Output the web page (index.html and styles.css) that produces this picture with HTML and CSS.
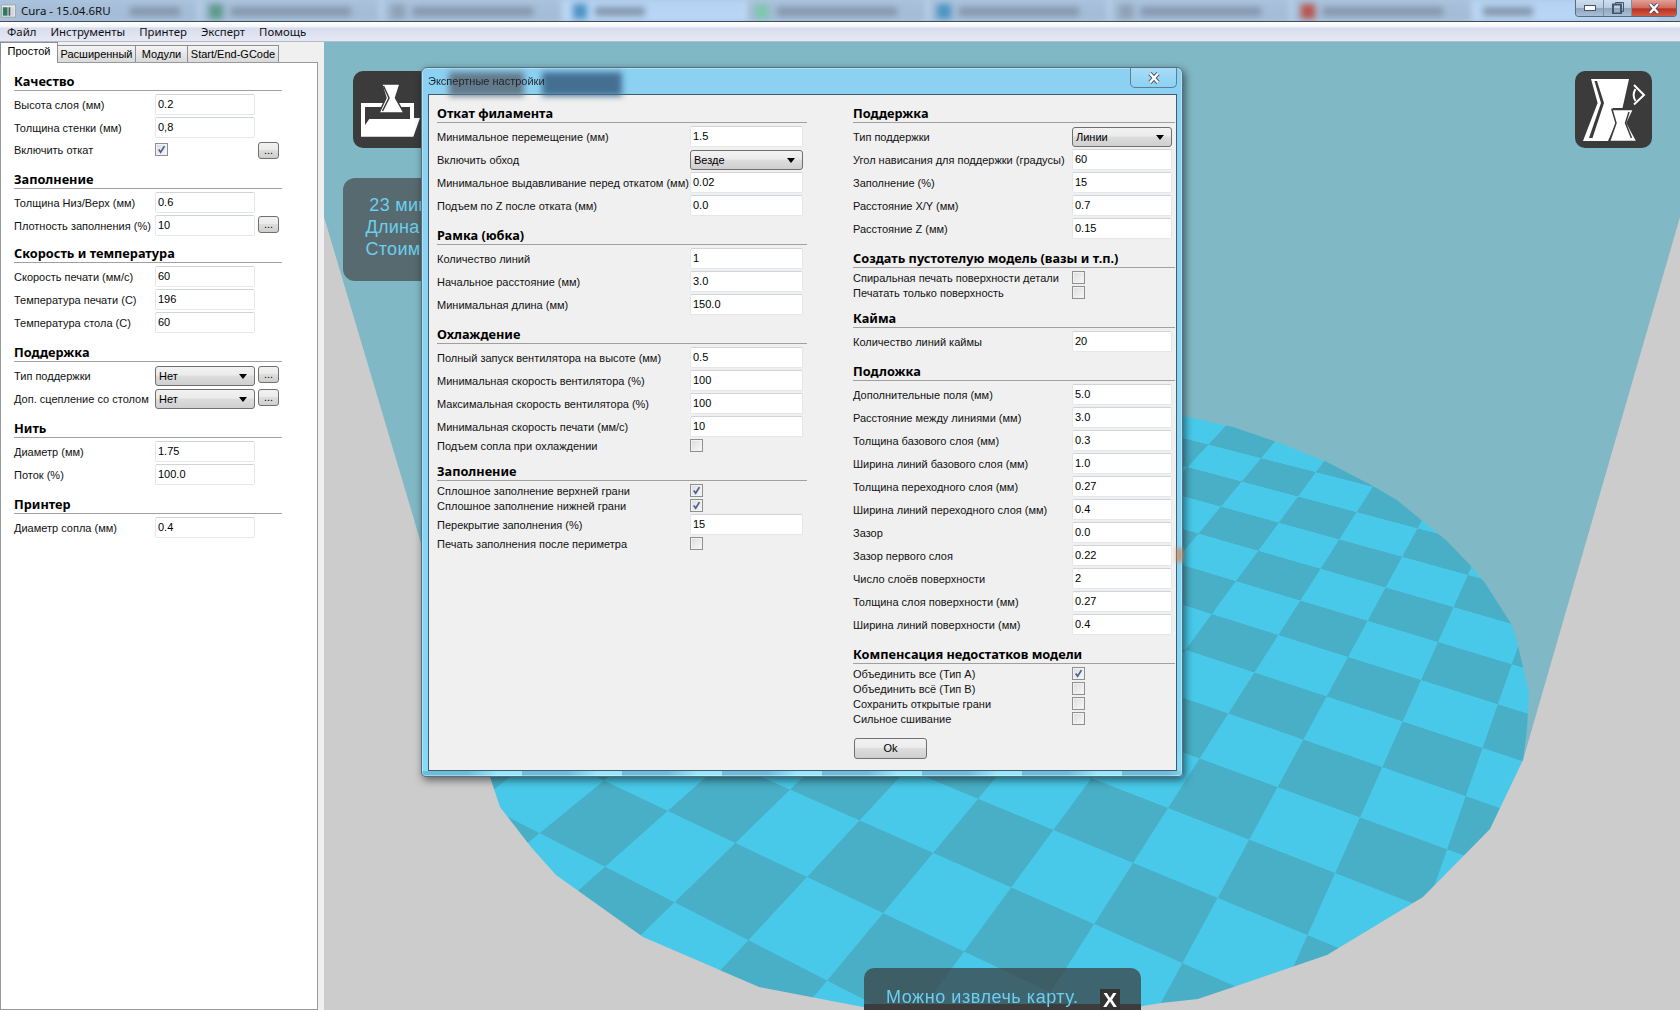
FILE: index.html
```html
<!DOCTYPE html>
<html lang="ru">
<head>
<meta charset="utf-8">
<title>Cura - 15.04.6RU</title>
<link rel="stylesheet" href="styles.css">
</head>
<body>
<div class="window">
  <header class="titlebar">
    <div class="aero">
      <div class="tile first"><i class="blot w50"></i></div>
      <div class="tile"><i class="ico green"></i><i class="blot w120"></i></div>
      <div class="tile"><i class="ico grey"></i><i class="blot w120"></i></div>
      <div class="tile light"><i class="ico blue"></i><i class="blot w50"></i></div>
      <div class="tile"><i class="ico mint"></i><i class="blot w120"></i></div>
      <div class="tile"><i class="ico blue"></i><i class="blot w120"></i></div>
      <div class="tile"><i class="ico grey"></i><i class="blot w120"></i></div>
      <div class="tile"><i class="ico red"></i><i class="blot w120"></i></div>
      <div class="tile light"><i class="blot w50"></i></div>
    </div>
    <div class="app-title">
      <svg class="app-icon" viewBox="0 0 16 14"><rect x="0.5" y="0.5" width="15" height="13" fill="#e8e8e8" stroke="#9aa"/><rect x="2" y="3" width="5" height="9" fill="#2f7a5a"/><rect x="8" y="3" width="2" height="9" fill="#556"/><rect x="11" y="3" width="3" height="9" fill="#cfd8dc"/></svg>
      <span>Cura - 15.04.6RU</span>
    </div>
    <div class="winctl">
      <div class="wbtn"><svg width="12" height="6" viewBox="0 0 12 6"><rect x="0.5" y="0.5" width="11" height="5" fill="#fff" stroke="#456"/></svg></div>
      <div class="wbtn"><svg width="12" height="12" viewBox="0 0 12 12"><path d="M3.5 2.500V.5h8v9H9.500" fill="none" stroke="#456"/><rect x="1" y="2.500" width="8" height="9" fill="none" stroke="#456" stroke-width="2"/></svg></div>
      <div class="wbtn close"><svg width="12" height="11" viewBox="0 0 12 11"><path d="M2 1l8 9M10 1l-8 9" stroke="#445" stroke-width="4"/><path d="M2 1l8 9M10 1l-8 9" stroke="#fff" stroke-width="2.400"/></svg></div>
    </div>
  </header>

  <nav class="menubar">
    <span>Файл</span><span>Инструменты</span><span>Принтер</span><span>Эксперт</span><span>Помощь</span>
  </nav>

  <div class="main">
    <aside class="sidebar">
      <div class="tabs">
        <div class="tab active">Простой</div>
        <div class="tab t2">Расширенный</div>
        <div class="tab t3">Модули</div>
        <div class="tab t4">Start/End-GCode</div>
      </div>
      <div class="page">
        <section class="sec">
          <h3>Качество</h3>
          <div class="row"><div class="lbl">Высота слоя (мм)</div><div class="field">0.2</div></div>
          <div class="row"><div class="lbl">Толщина стенки (мм)</div><div class="field">0,8</div></div>
          <div class="row chk-side"><div class="lbl">Включить откат</div><div class="cellbox"><span class="cb"><svg viewBox="0 0 13 13"><path d="M3.200 6.500l2.300 3.300L10 2.500" fill="none" stroke="#4c5f96" stroke-width="2"/></svg></span></div><div class="btn">...</div></div>
        </section>
        <section class="sec tight">
          <h3>Заполнение</h3>
          <div class="row"><div class="lbl">Толщина Низ/Верх (мм)</div><div class="field">0.6</div></div>
          <div class="row"><div class="lbl">Плотность заполнения (%)</div><div class="field">10</div><div class="btn">...</div></div>
        </section>
        <section class="sec">
          <h3>Скорость и температура</h3>
          <div class="row"><div class="lbl">Скорость печати (мм/с)</div><div class="field">60</div></div>
          <div class="row"><div class="lbl">Температура печати (C)</div><div class="field">196</div></div>
          <div class="row"><div class="lbl">Температура стола (C)</div><div class="field">60</div></div>
        </section>
        <section class="sec">
          <h3>Поддержка</h3>
          <div class="row"><div class="lbl">Тип поддержки</div><div class="combo">Нет</div><div class="btn">...</div></div>
          <div class="row"><div class="lbl">Доп. сцепление со столом</div><div class="combo">Нет</div><div class="btn">...</div></div>
        </section>
        <section class="sec">
          <h3>Нить</h3>
          <div class="row"><div class="lbl">Диаметр (мм)</div><div class="field">1.75</div></div>
          <div class="row"><div class="lbl">Поток (%)</div><div class="field">100.0</div></div>
        </section>
        <section class="sec">
          <h3>Принтер</h3>
          <div class="row"><div class="lbl">Диаметр сопла (мм)</div><div class="field">0.4</div></div>
        </section>
      </div>
    </aside>

    <div class="canvas">
      <div class="sky"></div>
      <div class="bed"><div class="checker"></div></div>

      <div class="toolbtn load">
        <svg viewBox="0 0 77 77"><path fill="#fff" fill-rule="evenodd" d="M8 32H61V47H67L60.300 65.700H8ZM12 36H57V48H16.300L12 54Z"/><path d="M28.700 13H47L42.500 27L51 42H26L33 27Z" fill="#fff" stroke="#3b3b3b" stroke-width="1.500"/><path d="M30.500 15L36 27L29.500 40" fill="none" stroke="#3b3b3b" stroke-width="1.500"/></svg>
      </div>
      <div class="toolbtn view">
        <svg viewBox="0 0 77 77"><path fill="#fff" d="M16 8H54L47.500 37H37.500L41 52L33 70H8L22.600 32Z"/><path d="M19.500 10L26 32L14 67H17.500L29 32L22 10Z" fill="#3b3b3b"/><path fill="#fff" stroke="#3b3b3b" stroke-width="1.500" d="M37 38.500H58.500L52 52L62 70.500H34.500L41 52Z"/><path d="M54 41L50.500 52L56.500 67" fill="none" stroke="#3b3b3b" stroke-width="1.500"/><path d="M59 14L69 24L59 33.500" fill="none" stroke="#fff" stroke-width="2"/><path d="M60.500 18C58 22 58 26 60.500 30" fill="none" stroke="#fff" stroke-width="2"/></svg>
      </div>

      <div class="info">
        <div>23 минуты</div>
        <div>Длина 0.5м</div>
        <div>Стоимость:</div>
      </div>

      <div class="notice">
        <span class="msg">Можно извлечь карту.</span>
        <span class="eject">X</span>
      </div>

      <div class="dialog">
        <div class="dlg-title">
          <i class="ghost g1"></i><i class="ghost g2"></i>
          <span>Экспертные настройки</span>
          <div class="dlg-close"><svg width="14" height="12" viewBox="0 0 14 12"><path d="M3 1.500l8 9M11 1.500l-8 9" stroke="#4a5a66" stroke-width="4.200"/><path d="M3 1.500l8 9M11 1.500l-8 9" stroke="#fff" stroke-width="2.400"/></svg></div>
        </div>
        <div class="dlg-body">
          <div class="col col-l">
            <section class="sec">
              <h3>Откат филамента</h3>
              <div class="row"><div class="lbl">Минимальное перемещение (мм)</div><div class="field">1.5</div></div>
              <div class="row"><div class="lbl">Включить обход</div><div class="combo">Везде</div></div>
              <div class="row"><div class="lbl">Минимальное выдавливание перед откатом (мм)</div><div class="field">0.02</div></div>
              <div class="row"><div class="lbl">Подъем по Z после отката (мм)</div><div class="field">0.0</div></div>
            </section>
            <section class="sec">
              <h3>Рамка (юбка)</h3>
              <div class="row"><div class="lbl">Количество линий</div><div class="field">1</div></div>
              <div class="row"><div class="lbl">Начальное расстояние (мм)</div><div class="field">3.0</div></div>
              <div class="row"><div class="lbl">Минимальная длина (мм)</div><div class="field">150.0</div></div>
            </section>
            <section class="sec">
              <h3>Охлаждение</h3>
              <div class="row"><div class="lbl">Полный запуск вентилятора на высоте (мм)</div><div class="field">0.5</div></div>
              <div class="row"><div class="lbl">Минимальная скорость вентилятора (%)</div><div class="field">100</div></div>
              <div class="row"><div class="lbl">Максимальная скорость вентилятора (%)</div><div class="field">100</div></div>
              <div class="row"><div class="lbl">Минимальная скорость печати (мм/с)</div><div class="field">10</div></div>
              <div class="row chk"><div class="lbl">Подъем сопла при охлаждении</div><span class="cb"></span></div>
            </section>
            <section class="sec">
              <h3>Заполнение</h3>
              <div class="row chk"><div class="lbl">Сплошное заполнение верхней грани</div><span class="cb"><svg viewBox="0 0 13 13"><path d="M3.200 6.500l2.300 3.300L10 2.500" fill="none" stroke="#4c5f96" stroke-width="2"/></svg></span></div>
              <div class="row chk"><div class="lbl">Сплошное заполнение нижней грани</div><span class="cb"><svg viewBox="0 0 13 13"><path d="M3.200 6.500l2.300 3.300L10 2.500" fill="none" stroke="#4c5f96" stroke-width="2"/></svg></span></div>
              <div class="row"><div class="lbl">Перекрытие заполнения (%)</div><div class="field">15</div></div>
              <div class="row chk"><div class="lbl">Печать заполнения после периметра</div><span class="cb"></span></div>
            </section>
          </div>
          <div class="col col-r">
            <section class="sec">
              <h3>Поддержка</h3>
              <div class="row"><div class="lbl">Тип поддержки</div><div class="combo">Линии</div></div>
              <div class="row"><div class="lbl">Угол нависания для поддержки (градусы)</div><div class="field">60</div></div>
              <div class="row"><div class="lbl">Заполнение (%)</div><div class="field">15</div></div>
              <div class="row"><div class="lbl">Расстояние X/Y (мм)</div><div class="field">0.7</div></div>
              <div class="row"><div class="lbl">Расстояние Z (мм)</div><div class="field">0.15</div></div>
            </section>
            <section class="sec">
              <h3>Создать пустотелую модель (вазы и т.п.)</h3>
              <div class="row chk"><div class="lbl">Спиральная печать поверхности детали</div><span class="cb"></span></div>
              <div class="row chk"><div class="lbl">Печатать только поверхность</div><span class="cb"></span></div>
            </section>
            <section class="sec">
              <h3>Кайма</h3>
              <div class="row"><div class="lbl">Количество линий каймы</div><div class="field">20</div></div>
            </section>
            <section class="sec">
              <h3>Подложка</h3>
              <div class="row"><div class="lbl">Дополнительные поля (мм)</div><div class="field">5.0</div></div>
              <div class="row"><div class="lbl">Расстояние между линиями (мм)</div><div class="field">3.0</div></div>
              <div class="row"><div class="lbl">Толщина базового слоя (мм)</div><div class="field">0.3</div></div>
              <div class="row"><div class="lbl">Ширина линий базового слоя (мм)</div><div class="field">1.0</div></div>
              <div class="row"><div class="lbl">Толщина переходного слоя (мм)</div><div class="field">0.27</div></div>
              <div class="row"><div class="lbl">Ширина линий переходного слоя (мм)</div><div class="field">0.4</div></div>
              <div class="row"><div class="lbl">Зазор</div><div class="field">0.0</div></div>
              <div class="row"><div class="lbl">Зазор первого слоя</div><div class="field">0.22</div></div>
              <div class="row"><div class="lbl">Число слоёв поверхности</div><div class="field">2</div></div>
              <div class="row"><div class="lbl">Толщина слоя поверхности (мм)</div><div class="field">0.27</div></div>
              <div class="row"><div class="lbl">Ширина линий поверхности (мм)</div><div class="field">0.4</div></div>
            </section>
            <section class="sec">
              <h3>Компенсация недостатков модели</h3>
              <div class="row chk"><div class="lbl">Объединить все (Тип А)</div><span class="cb"><svg viewBox="0 0 13 13"><path d="M3.200 6.500l2.300 3.300L10 2.500" fill="none" stroke="#4c5f96" stroke-width="2"/></svg></span></div>
              <div class="row chk"><div class="lbl">Объединить всё (Тип В)</div><span class="cb"></span></div>
              <div class="row chk"><div class="lbl">Сохранить открытые грани</div><span class="cb"></span></div>
              <div class="row chk"><div class="lbl">Сильное сшивание</div><span class="cb"></span></div>
            </section>
            <div class="ok">Ok</div>
          </div>
        </div>
        <i class="glow"></i>
      </div>
    </div>
  </div>
</div>
</body>
</html>
```
FILE: styles.css
```css
* { box-sizing: border-box; }
html, body { margin: 0; padding: 0; }
body {
  width: 1680px;
  height: 1010px;
  overflow: hidden;
  background: #f0f0f0;
  color: #000;
  font: 11px/21px "Liberation Sans", "DejaVu Sans", sans-serif;
}
.window { display: flex; flex-direction: column; height: 1010px; }

/* title bar */
.titlebar {
  position: relative;
  flex: none;
  height: 22px;
  display: flex;
  align-items: flex-start;
  justify-content: space-between;
  background: #aec8e4;
  border-bottom: 1px solid #3f4a55;
  overflow: hidden;
}
.aero {
  position: absolute;
  left: 0; top: 0; right: 0; bottom: 0;
  display: flex;
  filter: blur(3px);
}
.tile {
  flex: 0 0 182px;
  display: flex;
  align-items: center;
  gap: 8px;
  padding: 2px 8px 0 8px;
  background: linear-gradient(#a9c0d9, #a2bad5);
  border-right: 3px solid #c4dcf4;
}
.tile.first { flex-basis: 201px; padding-left: 130px; }
.tile.light { background: linear-gradient(#b5d2f2, #b9d7f8); }
.blot { display: block; height: 9px; background: #8497ad; }
.w50 { width: 50px; }
.w120 { width: 120px; }
.ico { display: block; width: 14px; height: 15px; }
.green { background: #5f9a8c; }
.grey { background: #8fa2b5; }
.blue { background: #4e94c4; }
.mint { background: #7fc6ae; }
.red { background: #b8574e; }

.app-title {
  position: relative;
  display: flex;
  align-items: center;
  gap: 5px;
  height: 21px;
  padding-left: 1px;
  font: 11.5px/21px "Noto Sans", sans-serif;
  color: #111;
}
.app-icon { width: 15px; height: 14px; }
.winctl {
  position: relative;
  display: flex;
  width: 102px;
  height: 17px;
  margin-right: 3px;
  border: 1px solid #5a6b7b;
  border-top: 0;
  border-radius: 0 0 4px 4px;
  overflow: hidden;
}
.wbtn {
  flex: 0 0 28px;
  display: flex;
  align-items: center;
  justify-content: center;
  background: linear-gradient(#cfdeee 0, #b7cbe0 50%, #8ea6bf 52%, #a9bfd6 100%);
  border-right: 1px solid #7d8fa2;
}
.wbtn.close {
  flex: 1;
  border: 0;
  background: linear-gradient(#e2a198 0, #cf6a5c 50%, #b83221 55%, #d55a40 100%);
}

/* menu */
.menubar {
  flex: none;
  height: 20px;
  display: flex;
  gap: 14px;
  padding-left: 7px;
  font: 11.4px/19px "Noto Sans", sans-serif;
  color: #111;
  background: linear-gradient(#fff 0, #f4f5fa 25%, #d8ddee 32%, #e6e9f4 100%);
  border-bottom: 1px solid #b5b9cc;
}

.main { flex: 1; display: flex; min-height: 0; }

/* sidebar */
.sidebar {
  flex: 0 0 324px;
  display: flex;
  flex-direction: column;
  background: #f0f0f0;
}
.tabs { flex: none; height: 20px; display: flex; align-items: flex-end; }
.tab {
  height: 17px;
  line-height: 16px;
  text-align: center;
  background: linear-gradient(#f4f4f4, #d9d9d9);
  border: 1px solid #8c8e94;
  border-bottom: 0;
  border-left: 0;
}
.tab.active {
  position: relative;
  z-index: 1;
  width: 58px;
  height: 21px;
  margin-bottom: -1px;
  line-height: 17px;
  background: #fff;
  border-left: 1px solid #8c8e94;
}
.t2 { width: 78px; }
.t3 { width: 52px; }
.t4 { width: 91px; }
.page {
  flex: 1;
  width: 318px;
  padding: 1px 0 0 13px;
  background: #fff;
  border: 1px solid #97999d;
}
.page .sec { width: 268px; }
.page .lbl { width: 141px; }
.page .field, .page .combo { width: 100px; }
.tight { margin-bottom: -2px; }

/* shared settings rows */
.sec h3 {
  height: 27px;
  margin: 0 0 3px;
  padding-top: 9px;
  font: 700 12.75px/16px "Noto Sans", sans-serif;
  color: #000;
  border-bottom: 1px solid #a0a0a0;
}
.row { display: flex; align-items: flex-start; height: 23px; }
.lbl { flex: none; line-height: 22px; color: #111; white-space: nowrap; }
.field {
  flex: none;
  height: 21px;
  padding-left: 2px;
  line-height: 18px;
  background: #fff;
  border: 1px solid #e3e6ea;
  border-top-color: #d0d4d8;
  border-radius: 2px;
}
.combo {
  position: relative;
  flex: none;
  height: 20px;
  margin-top: 1px;
  padding-left: 3px;
  line-height: 18px;
  background: linear-gradient(#f2f2f2 0, #ebebeb 45%, #dddddd 50%, #cfcfcf 100%);
  border: 1px solid #6f6f6f;
  border-radius: 3px;
}
.combo::after {
  content: "";
  position: absolute;
  right: 7px;
  top: 7px;
  border: 4px solid transparent;
  border-top: 5px solid #000;
  border-bottom: 0;
  border-left-width: 4px;
}
.btn {
  flex: none;
  width: 21px;
  height: 17px;
  margin: 1px 0 0 3px;
  line-height: 15px;
  text-align: center;
  background: linear-gradient(#f2f2f2 0, #ebebeb 45%, #dddddd 50%, #cfcfcf 100%);
  border: 1px solid #707070;
  border-radius: 3px;
}
.cb {
  flex: none;
  display: block;
  width: 13px;
  height: 13px;
  background: linear-gradient(135deg, #dcdcdc, #f8f8f8);
  border: 1px solid #8e8f8f;
  box-shadow: inset 0 0 0 1px #f2f2f2;
}
.cb svg { display: block; width: 11px; height: 11px; }
.row.chk { height: 15px; align-items: flex-start; }
.row.chk .lbl { line-height: 15px; }
.chk-side { height: 22px; }
.chk-side .cellbox { flex: 0 0 100px; padding-top: 3px; }
.chk-side .btn { margin-top: 2px; }
.chk-side .lbl { line-height: 21px; }

/* 3D view */
.canvas {
  position: relative;
  flex: 1;
  overflow: hidden;
  background: #cccccc;
}
.sky {
  position: absolute;
  inset: 0;
  background: #80b9c5;
  clip-path: polygon(0 0, 1356px 0, 1356px 175px, 1199px 718px, 166px 733px, 0 175px);
}
.bed {
  position: absolute;
  inset: 0;
  overflow: hidden;
  clip-path: polygon(166px 735px, 176px 765px, 207px 805px, 232px 833px, 319px 895px, 435px 945px, 539px 965px, 580px 972px, 770px 972px, 837px 961px, 874px 957px, 1003px 913px, 1099px 855px, 1166px 787px, 1199px 718px, 1203px 688px, 1205px 651px, 1193px 599px, 1188px 583px, 1161px 541px, 1146px 523px, 1123px 499px, 1096px 477px, 1073px 458px, 1049px 444px, 1003px 420px, 956px 401px, 909px 385px, 859px 374px, 560px 350px, 270px 460px, 140px 650px);
}
.checker {
  position: absolute;
  left: 0;
  top: 0;
  width: 2200px;
  height: 1900px;
  transform-origin: 0 0;
  transform: matrix3d(.50076, .08349, 0, -.0002545, -.69199, .11795, 0, -.000463, 0, 0, 1, 0, 895.23, 436.67, 0, 1.8193);
  background: repeating-conic-gradient(#49afc6 0 25%, #48c9e9 0 50%) 0 0 / 200px 200px;
}

.toolbtn {
  position: absolute;
  top: 29px;
  width: 77px;
  height: 77px;
  background: #3b3b3b;
  border-radius: 10px;
}
.toolbtn svg { display: block; width: 77px; height: 77px; }
.load { left: 29px; }
.view { right: 28px; }

.info {
  position: absolute;
  left: 19px;
  top: 136px;
  padding: 16px 27px 0 20px;
  width: 150px;
  height: 103px;
  background: #576a6f;
  border-radius: 12px;
  font: 18px/22px "Liberation Sans", sans-serif;
  letter-spacing: .3px;
  color: #6ccfee;
  text-align: center;
  white-space: nowrap;
}

.notice {
  position: absolute;
  left: 540px;
  top: 926px;
  width: 277px;
  height: 42px;
  display: flex;
  align-items: flex-start;
  padding: 18px 0 0 22px;
  background: linear-gradient(rgba(58, 62, 64, .72) 0, rgba(58, 62, 64, .72) 36px, #3c3c3c 36px);
  border-radius: 10px 10px 0 0;
  color: #6ccfee;
  font: 18px/22px "Liberation Sans", sans-serif;
}
.msg { width: 214px; white-space: nowrap; letter-spacing: .55px; }
.eject {
  width: 20px;
  height: 21px;
  margin-top: 3px;
  background: #333;
  color: #fff;
  font: 700 21px/21px "Liberation Sans", sans-serif;
  text-align: center;
}

/* dialog */
.dialog {
  position: absolute;
  left: 97px;
  top: 25px;
  width: 762px;
  height: 710px;
  display: flex;
  flex-direction: column;
  padding: 0 5px 5px 6px;
  background:
    repeating-linear-gradient(90deg, #6dbcdc 0 45px, #96e6fc 75px 100px) left bottom / 100% 5px no-repeat,
    linear-gradient(#8cd1f2 0, #8cd1f2 30px, #84d6f6 95%, #86def9 100%);
  border-radius: 6px 6px 4px 4px;
  border: 1px solid #57707f;
  box-shadow: 0 0 0 1px rgba(255, 255, 255, .35) inset, 2px 3px 8px rgba(0, 0, 0, .55);
}
.dlg-title {
  position: relative;
  flex: none;
  height: 26px;
  display: flex;
  justify-content: space-between;
  align-items: flex-start;
  line-height: 27px;
  color: #1b2530;
}
.dlg-title span { position: relative; }
.ghost { position: absolute; display: block; filter: blur(3px); }
.g1 { left: 21px; top: 4px; width: 75px; height: 24px; background: #64798a; }
.g2 { left: 114px; top: 4px; width: 80px; height: 24px; background: #446f92; }
.dlg-close {
  position: relative;
  width: 47px;
  height: 20px;
  display: flex;
  align-items: center;
  justify-content: center;
  background: linear-gradient(#a8dcf6, #8cd1f2);
  border: 1px solid #5a7f96;
  border-top: 0;
  border-radius: 0 0 5px 5px;
}
.dlg-body {
  flex: 1;
  display: flex;
  gap: 46px;
  padding: 1px 0 0 8px;
  background: #f0f0f0;
  border: 1px solid #3f5c6e;
}
.col-l { width: 370px; }
.col-l .lbl { width: 253px; }
.col-l .field, .col-l .combo { width: 113px; }
.col-r { width: 322px; }
.col-r .lbl { width: 219px; }
.col-r .field, .col-r .combo { width: 100px; }
.ok {
  width: 73px;
  height: 21px;
  margin: 11px 0 0 1px;
  line-height: 19px;
  text-align: center;
  background: linear-gradient(#f2f2f2 0, #ebebeb 45%, #dddddd 50%, #cfcfcf 100%);
  border: 1px solid #707070;
  border-radius: 3px;
}
.glow {
  position: absolute;
  right: 0;
  top: 480px;
  width: 5px;
  height: 14px;
  background: #d08a5a;
  filter: blur(2px);
}
```
